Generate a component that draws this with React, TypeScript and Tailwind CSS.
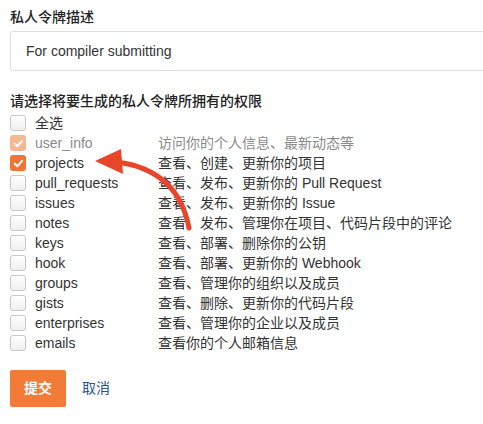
import React from 'react';

const perms: { name: string; desc: string; checked?: boolean; disabled?: boolean }[] = [
  { name: 'user_info', desc: '访问你的个人信息、最新动态等', checked: true, disabled: true },
  { name: 'projects', desc: '查看、创建、更新你的项目', checked: true },
  { name: 'pull_requests', desc: '查看、发布、更新你的 Pull Request' },
  { name: 'issues', desc: '查看、发布、更新你的 Issue' },
  { name: 'notes', desc: '查看、发布、管理你在项目、代码片段中的评论' },
  { name: 'keys', desc: '查看、部署、删除你的公钥' },
  { name: 'hook', desc: '查看、部署、更新你的 Webhook' },
  { name: 'groups', desc: '查看、管理你的组织以及成员' },
  { name: 'gists', desc: '查看、删除、更新你的代码片段' },
  { name: 'enterprises', desc: '查看、管理你的企业以及成员' },
  { name: 'emails', desc: '查看你的个人邮箱信息' },
];

function Box({ checked, disabled }: { checked?: boolean; disabled?: boolean }) {
  if (checked) {
    return (
      <span
        className={
          'flex h-[16px] w-[16px] shrink-0 items-center justify-center rounded-[3px] ' +
          (disabled ? 'bg-[#f6b690]' : 'bg-[#ef7535]')
        }
      >
        <svg width="11" height="11" viewBox="0 0 12 12">
          <path d="M2 6.2 L4.8 9 L10 3.2" fill="none" stroke="#fff" strokeWidth="2.2" strokeLinecap="round" strokeLinejoin="round" />
        </svg>
      </span>
    );
  }
  return (
    <span className="block h-[16px] w-[16px] shrink-0 rounded-[3px] border border-[#c9c9c9] bg-gradient-to-b from-white to-[#efefef]" />
  );
}

export default function App() {
  return (
    <div
      className="relative h-[424px] w-[483px] overflow-hidden bg-white pl-[10px] pt-[7px] text-[#333]"
      style={{ fontFamily: '"Liberation Sans", "Noto Sans CJK SC", sans-serif' }}
    >
      <div className="text-[14px] font-medium leading-[20px] text-[#222]">私人令牌描述</div>
      <div className="mt-[4px] flex h-[40px] w-[480px] items-center rounded-[3px] border border-[#dedede] pl-[15px] text-[14px] text-[#333]">
        For compiler submitting
      </div>

      <div className="mt-[20px] text-[14px] font-medium leading-[20px] text-[#222]">请选择将要生成的私人令牌所拥有的权限</div>

      <div className="mt-[2px] flex flex-col">
        <label className="flex h-[20px] items-center text-[14px]">
          <Box />
          <span className="ml-[9px]">全选</span>
        </label>
        {perms.map((p) => (
          <label key={p.name} className="flex h-[20px] items-center text-[14px]">
            <Box checked={p.checked} disabled={p.disabled} />
            <span className={'ml-[9px] w-[123px] ' + (p.disabled ? 'text-[#8a8a8a]' : 'text-[#333]')}>{p.name}</span>
            <span className={p.disabled ? 'text-[#8a8a8a]' : 'text-[#333]'}>{p.desc}</span>
          </label>
        ))}
      </div>

      <div className="mt-[17px] flex items-center">
        <button className="h-[37px] w-[56px] rounded-[2px] bg-[#f17b37] text-[14px] font-semibold text-white">
          提交
        </button>
        <span className="ml-[16px] text-[14px] text-[#24568f]">取消</span>
      </div>

      <svg className="pointer-events-none absolute left-0 top-0" width="483" height="424" viewBox="0 0 483 424">
        <path d="M189 228 Q178 170 117 162" fill="none" stroke="#e8452a" strokeWidth="5" strokeLinecap="round" />
        <polygon points="95,161 121,149 123,174" fill="#e8452a" />
      </svg>
    </div>
  );
}
